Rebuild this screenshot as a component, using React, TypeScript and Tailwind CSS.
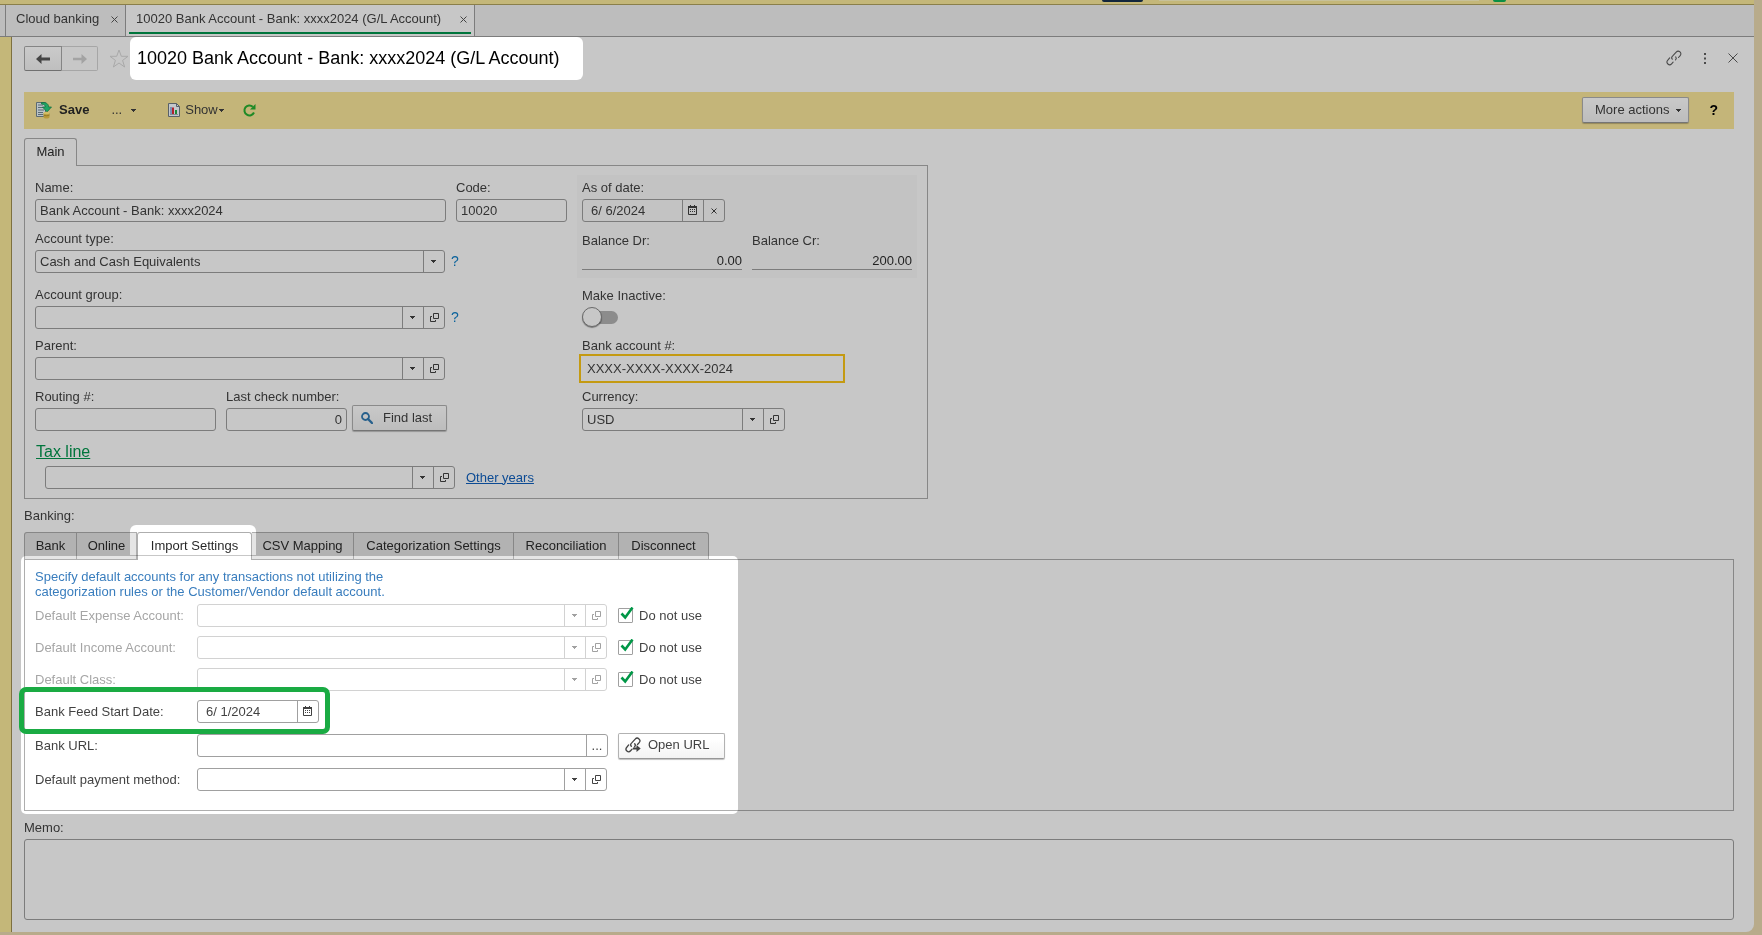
import type { ReactNode } from "react";

const FIELD = "h-[23px] rounded-[3px] border border-[#7c7c7c]";
const LABEL = "block leading-[22px] whitespace-nowrap";
const RAISED =
  "flex h-[26px] shrink-0 items-center rounded-[2px] border border-[#8a8a8a] border-b-[#757575] bg-gradient-to-b from-[#c9c9c9] to-[#bdbdbd] shadow-[0_1px_1px_rgba(0,0,0,0.25)] whitespace-nowrap";

function Caret() {
  return (
    <svg width="5" height="3" viewBox="0 0 5 3" shapeRendering="crispEdges" aria-hidden="true">
      <path d="M0 0h5v1H0zM1 1h3v1H1zM2 2h1v1H2z" fill="currentColor" />
    </svg>
  );
}

function OpenIcon() {
  return (
    <svg width="9" height="9" viewBox="0 0 9 9" fill="none" stroke="currentColor" aria-hidden="true">
      <path d="M3.500.500h5v5h-5zM2 3.500H.500v5h5V7" />
    </svg>
  );
}

function CalendarIcon() {
  return (
    <svg width="9" height="10" viewBox="0 0 9 10" aria-hidden="true">
      <path d="M.500 1.500h8v8h-8z" fill="none" stroke="currentColor" />
      <path d="M0 1h9v2H0zM2 0h1v1H2zM6 0h1v1H6z" fill="currentColor" />
      <path d="M2 4h1v1H2zM4 4h1v1H4zM6 4h1v1H6zM2 6h1v1H2zM4 6h1v1H4zM6 6h1v1H6z" fill="currentColor" />
    </svg>
  );
}

function LinkIcon({ arrow }: { arrow?: boolean }) {
  return (
    <svg width="16" height="16" viewBox="0 0 16 16" fill="none" stroke="currentColor" strokeWidth={arrow ? 1.3 : 1.1} strokeLinecap="round" aria-hidden="true">
      <path d="M6.300 9.200c-.8-.9-.7-2.200.2-3.100l3.700-4c1-1.100 2.700-1.200 3.800-.2s1.200 2.600.2 3.700l-1.700 1.900" />
      <path d="M9.700 6.800c.8.900.7 2.200-.2 3.100" />
      <path d="M3.700 7.900 1.800 10.200c-1 1.100-1 2.800.1 3.800s2.700.9 3.700-.2l1.500-1.700" />
      {arrow && <path d="M8 10.500h3.500V8l4.200 3.500-4.200 3.500v-2.500H8z" fill="currentColor" stroke="none" />}
    </svg>
  );
}

function SaveIcon() {
  return (
    <svg width="16" height="17" viewBox="0 0 16 17" aria-hidden="true">
      <path d="M.5.500h9v14h-9z" fill="#b9c2c6" stroke="#5b6a72" />
      <path d="M2 3h5M2 5.500h5M2 8h6M2 10.500h5M2 12.500h5" stroke="#5b6a72" />
      <path d="M5.500.500c4-.3 7 .8 7.200 4.500h2.800l-4.500 5-4.500-5h2.700C9 3 8 2 5.500 2z" fill="#1fa564" stroke="#0b6b3b" strokeWidth=".7" />
      <path d="M7.500 11v4c0 2 6 2 6 0v-4z" fill="#b99a3a" />
      <ellipse cx="10.500" cy="11" rx="3" ry="1.200" fill="#d3bd66" />
      <path d="M7.500 13c1 1 5 1 6 0" fill="none" stroke="#83691b" strokeWidth=".7" />
    </svg>
  );
}

function ReportIcon() {
  return (
    <svg width="12" height="14" viewBox="0 0 12 14" aria-hidden="true">
      <path d="M.5.500h8l3 3v10H.5z" fill="#c4c8cc" stroke="#586068" />
      <path d="M8.500.500v3h3" fill="none" stroke="#586068" />
      <path d="M3 4v7" stroke="#33589a" />
      <path d="M5 4.500v6.500" stroke="#b3202c" strokeWidth="2" />
      <path d="M8 7v4" stroke="#1d8a38" strokeWidth="2" />
      <path d="M2 11.500h8" stroke="#586068" strokeWidth=".6" />
    </svg>
  );
}

// Lifts everything below it back to full brightness.
// Its parents must not open a stacking context, or the blend sees nothing.
function Spotlight({ className }: { className: string }) {
  return (
    <div
      aria-hidden="true"
      className={`pointer-events-none absolute z-20 bg-[#393939] mix-blend-color-dodge ${className}`}
    />
  );
}

type ComboProps = {
  id: string;
  value?: string;
  width?: string;
  openable?: boolean;
  disabled?: boolean;
};

function Combo({ id, value = "", width = "w-[410px]", openable = true, disabled }: ComboProps) {
  const line = disabled ? "border-[#a3a3a3]" : "border-[#7c7c7c]";
  const ink = disabled ? "text-[#7d7d7d]" : "text-[#333333]";
  return (
    <div className={`flex h-[23px] shrink-0 rounded-[3px] border ${line} ${ink} ${width}`}>
      <select id={id} disabled={disabled} defaultValue={value} className="min-w-0 flex-1 appearance-none bg-transparent pl-1 outline-none">
        <option value={value}>{value}</option>
      </select>
      <span className={`pointer-events-none flex w-[21px] items-center justify-center border-l pr-px ${line}`}>
        <Caret />
      </span>
      {openable && (
        <button type="button" aria-label="Open" disabled={disabled} className={`flex w-[21px] items-center justify-center border-l pl-px ${line}`}>
          <OpenIcon />
        </button>
      )}
    </div>
  );
}

function DateBox({ id, value, clearable }: { id: string; value: string; clearable?: boolean }) {
  return (
    <div className={`flex w-fit ${FIELD}`}>
      <input id={id} defaultValue={value} className="w-[99px] bg-transparent pl-2 outline-none" />
      <button type="button" aria-label="Choose date" className="flex w-[21px] items-center justify-center border-l border-[#7c7c7c] pr-px pb-px">
        <CalendarIcon />
      </button>
      {clearable && (
        <button type="button" aria-label="Clear date" className="flex w-[21px] items-center justify-center border-l border-[#7c7c7c]">
          <svg width="6" height="6" viewBox="0 0 6 6" stroke="currentColor" aria-hidden="true">
            <path d="M.5.500l5 5M5.500.500l-5 5" />
          </svg>
        </button>
      )}
    </div>
  );
}

function Field({ id, label, children }: { id: string; label: string; children: ReactNode }) {
  return (
    <div>
      <label htmlFor={id} className={LABEL}>{label}</label>
      {children}
    </div>
  );
}

function Help() {
  return (
    <button type="button" aria-label="Help" className="ml-[6px] text-[14px] text-[#0b639c]">?</button>
  );
}

function WindowTab({ title, width, active }: { title: string; width: string; active?: boolean }) {
  return (
    <div className={`flex border-r border-[#7c7c7c] px-[3px] ${width} ${active ? "bg-[#c7c7c7]" : ""}`}>
      <div className={`mb-[2px] flex flex-1 items-center justify-between border-b-2 pt-px pr-1 pl-[7px] ${active ? "border-[#00753c]" : "border-transparent"}`}>
        <button type="button" className="whitespace-nowrap">{title}</button>
        <button type="button" aria-label="Close tab">
          <svg width="7" height="7" viewBox="0 0 7 7" stroke="#444444" aria-hidden="true">
            <path d="M.5.500l6 6M6.500.500l-6 6" />
          </svg>
        </button>
      </div>
    </div>
  );
}

const bankingTabs = [
  { title: "Bank", width: "w-[53px]" },
  { title: "Online", width: "w-[60px]" },
  { title: "Import Settings", width: "w-[115px]" },
  { title: "CSV Mapping", width: "w-[102px]" },
  { title: "Categorization Settings", width: "w-[160px]" },
  { title: "Reconciliation", width: "w-[105px]" },
  { title: "Disconnect", width: "w-[90px]" },
];

const defaults = [
  { id: "expense", label: "Default Expense Account:" },
  { id: "income", label: "Default Income Account:" },
  { id: "class", label: "Default Class:" },
];

function MainPanel() {
  return (
    <div className="flex w-fit gap-[10px] border border-[#878787] pt-[9px] pr-[10px] pb-[9px] pl-[10px]">
      <div className="flex w-[532px] flex-col gap-[6px] pt-[2px]">
        <div className="flex gap-[10px]">
          <Field id="name" label="Name:">
            <input id="name" defaultValue="Bank Account - Bank: xxxx2024" className={`block w-[411px] bg-transparent px-1 ${FIELD}`} />
          </Field>
          <Field id="code" label="Code:">
            <input id="code" defaultValue="10020" className={`block w-[111px] bg-transparent px-1 ${FIELD}`} />
          </Field>
        </div>
        <Field id="type" label="Account type:">
          <div className="flex">
            <Combo id="type" value="Cash and Cash Equivalents" openable={false} />
            <Help />
          </div>
        </Field>
        <div className="pt-[5px]">
          <Field id="group" label="Account group:">
            <div className="flex">
              <Combo id="group" />
              <Help />
            </div>
          </Field>
        </div>
        <Field id="parent" label="Parent:">
          <Combo id="parent" />
        </Field>
        <div className="flex items-end">
          <Field id="routing" label="Routing #:">
            <input id="routing" className={`block w-[181px] bg-transparent px-1 ${FIELD}`} />
          </Field>
          <div className="ml-[10px]">
            <Field id="check" label="Last check number:">
              <input id="check" defaultValue="0" className={`block w-[121px] bg-transparent px-1 text-right ${FIELD}`} />
            </Field>
          </div>
          <button type="button" className={`ml-[5px] gap-[10px] pr-[14px] pl-2 ${RAISED}`}>
            <svg width="12" height="12" viewBox="0 0 12 12" fill="none" stroke="#27608c" aria-hidden="true">
              <circle cx="4.500" cy="4.500" r="3.500" strokeWidth="1.800" />
              <path d="M7 7l4 4" strokeWidth="2.400" strokeLinecap="round" />
            </svg>
            Find last
          </button>
        </div>
        <div>
          <a href="#tax-line" className="ml-px block w-fit pt-[3px] text-[16px] leading-6 text-[#00753c] underline">Tax line</a>
          <div className="mt-[2px] flex items-center pl-[10px]">
            <Combo id="taxline" />
            <a href="#other-years" className="ml-[11px] text-[#0c4b94] underline">Other years</a>
          </div>
        </div>
      </div>

      <div className="w-[340px]">
        <div className="bg-[#c3c3c3] px-[5px] pt-[2px] pb-2">
          <Field id="asof" label="As of date:">
            <DateBox id="asof" value="6/ 6/2024" clearable />
          </Field>
          <div className="mt-2 flex gap-[10px]">
            <div className="w-[160px]">
              <label htmlFor="dr" className={LABEL}>Balance Dr:</label>
              <input id="dr" readOnly defaultValue="0.00" className="block h-[18px] w-full border-b border-[#7c7c7c] bg-transparent text-right text-[#1f1f1f]" />
            </div>
            <div className="w-[160px]">
              <label htmlFor="cr" className={LABEL}>Balance Cr:</label>
              <input id="cr" readOnly defaultValue="200.00" className="block h-[18px] w-full border-b border-[#7c7c7c] bg-transparent text-right text-[#1f1f1f]" />
            </div>
          </div>
        </div>
        <div className="flex flex-col gap-[6px] px-[5px] pt-[7px]">
          <div className="h-[44px]">
            <Field id="inactive" label="Make Inactive:">
              <div className="relative flex h-5 w-9 items-center">
                <input id="inactive" type="checkbox" role="switch" className="ml-2 h-[13px] w-7 appearance-none rounded-full bg-[#8c8c8c]" />
                <span className="pointer-events-none absolute left-0 size-5 rounded-full border border-[#6a6a6a] bg-[#c7c7c7] shadow-[0_1px_1px_rgba(0,0,0,0.4)]" />
              </div>
            </Field>
          </div>
          <Field id="accountno" label="Bank account #:">
            <input
              id="accountno"
              defaultValue="XXXX-XXXX-XXXX-2024"
              className="block h-[23px] w-[260px] bg-transparent px-[5px] outline-2 outline-offset-1 outline-[#c49a12]"
            />
          </Field>
          <Field id="currency" label="Currency:">
            <Combo id="currency" value="USD" width="w-[203px]" />
          </Field>
        </div>
      </div>
    </div>
  );
}

function ImportPanel() {
  return (
    <div className="relative border border-[#878787] px-[10px] pt-[9px] pb-[19px]">
      <p className="mb-[5px] leading-[15px] text-[#2c6193]">
        Specify default accounts for any transactions not utilizing the
        <br />
        categorization rules or the Customer/Vendor default account.
      </p>
      <div className="flex flex-col gap-[9px]">
        {defaults.map((d) => (
          <div key={d.id} className="flex h-[23px] items-center">
            <label htmlFor={d.id} className="w-[162px] text-[#808080]">{d.label}</label>
            <Combo id={d.id} disabled />
            <label className="ml-[11px] flex items-center gap-[6px]">
              <span className="relative flex">
                <input type="checkbox" defaultChecked className="size-[15px] appearance-none rounded-[1px] border border-[#7c7c7c]" />
                <svg width="14" height="13" viewBox="0 0 14 13" className="pointer-events-none absolute -top-px left-[2px]" fill="none" stroke="#007537" strokeWidth="2.600" aria-hidden="true">
                  <path d="M1.500 6.500l3.700 4L12.500.500" />
                </svg>
              </span>
              Do not use
            </label>
          </div>
        ))}
        <div className="flex h-[23px] items-center">
          <label htmlFor="feed" className="w-[162px]">Bank Feed Start Date:</label>
          <DateBox id="feed" value="6/ 1/2024" />
        </div>
      </div>
      <div className="mt-[11px] flex flex-col gap-[11px]">
        <div className="flex h-[23px] items-center">
          <label htmlFor="url" className="w-[162px]">Bank URL:</label>
          <div className={`flex w-[411px] ${FIELD}`}>
            <input id="url" className="min-w-0 flex-1 bg-transparent px-1" />
            <button type="button" aria-label="Edit URL" className="w-[21px] border-l border-[#7c7c7c]">...</button>
          </div>
          <button type="button" className={`ml-[10px] gap-[7px] pr-[15px] pb-[2px] pl-[6px] ${RAISED}`}>
            <LinkIcon arrow />
            Open URL
          </button>
        </div>
        <div className="flex h-[23px] items-center">
          <label htmlFor="payment" className="w-[162px]">Default payment method:</label>
          <Combo id="payment" />
        </div>
      </div>
      <Spotlight className="-top-1 -bottom-1 -left-1 w-[717px] rounded-[5px]" />
      <div aria-hidden="true" className="pointer-events-none absolute top-[127px] -left-[6px] z-30 h-[47px] w-[311px] rounded-[7px] border-[5px] border-[#1aab43]" />
    </div>
  );
}

export default function App() {
  return (
    <div className="flex min-h-screen flex-col bg-[#b8ab8b] pr-2 pb-[3px] font-['Liberation_Sans',Arial,sans-serif] text-[13px] text-[#333333]">
      <div className="flex h-[5px] items-start justify-end border-b border-[#8a7f4a] bg-[#c4b779] pr-[248px]">
        <span className="h-[2px] w-[41px] rounded-b-[2px] bg-[#12263c]" />
        <span className="ml-4 h-px w-[320px] bg-[#c7c19a]" />
        <span className="ml-[14px] h-[2px] w-[13px] rounded-b-full bg-[#0a8f45]" />
      </div>

      <div className="flex h-8 border-b border-[#7c7c7c] bg-[#bdbdbd]">
        <span className="w-[6px] border-r border-[#7c7c7c]" />
        <WindowTab title="Cloud banking" width="w-[120px]" />
        <WindowTab title="10020 Bank Account - Bank: xxxx2024 (G/L Account)" width="w-[349px]" active />
      </div>

      <div className="flex flex-1">
        <div className="w-3 shrink-0 border-r border-[#7d7040] bg-[#c4b779]" />
        <main className="min-w-0 flex-1 rounded-br-[8px] bg-[#c7c7c7] pr-5 pb-3 pl-3">
          <header className="flex h-[55px] items-start">
            <div className="mt-[9px] flex">
              <button type="button" aria-label="Back" className="flex h-[25px] w-[38px] items-center justify-center rounded-l-[2px] border border-[#858585] border-b-[#707070] bg-gradient-to-b from-[#cacaca] to-[#bfbfbf]">
                <svg width="14" height="10" viewBox="0 0 14 10" fill="#454545" aria-hidden="true">
                  <path d="M0 5l5.500-5v3.500H14v3H5.500V10z" />
                </svg>
              </button>
              <button type="button" aria-label="Forward" className="flex h-[25px] w-9 items-center justify-center rounded-r-[2px] border border-l-0 border-[#a6a6a6]">
                <svg width="14" height="10" viewBox="0 0 14 10" fill="#a3a3a3" aria-hidden="true">
                  <path d="M14 5L8.500 0v3.800H0v2.400h8.500V10z" />
                </svg>
              </button>
            </div>
            <button type="button" aria-label="Add to favorites" className="mt-3 ml-[11px]">
              <svg width="20" height="19" viewBox="0 0 20 19" fill="none" stroke="#a9a9a9" aria-hidden="true">
                <path d="M10 1l2.300 6.300H19l-5.400 4.100 2 6.600L10 14l-5.600 4 2-6.600L1 7.300h6.700z" />
              </svg>
            </button>
            <h1 className="relative ml-px h-[43px] w-[453px] pl-[7px] text-[18px] leading-[42px] whitespace-nowrap text-black">
              10020 Bank Account - Bank: xxxx2024 (G/L Account)
              <Spotlight className="inset-0 rounded-[6px]" />
            </h1>
            <div className="mt-[13px] ml-auto flex items-center gap-[22px] text-[#4a4a4a]">
              <button type="button" aria-label="Copy link"><LinkIcon /></button>
              <button type="button" aria-label="More">
                <svg width="2" height="11" viewBox="0 0 2 11" fill="currentColor" aria-hidden="true">
                  <path d="M0 0h2v2H0zM0 4.500h2v2H0zM0 9h2v2H0z" />
                </svg>
              </button>
              <button type="button" aria-label="Close" className="-mr-1">
                <svg width="10" height="10" viewBox="0 0 10 10" stroke="currentColor" aria-hidden="true">
                  <path d="M.5.500l9 9M9.500.500l-9 9" />
                </svg>
              </button>
            </div>
          </header>

          <div className="flex h-[37px] items-center bg-[#c4b579] pr-4 pb-px pl-3">
            <button type="button" className="flex items-center gap-[7px] font-bold text-[#222222]">
              <SaveIcon />
              Save
            </button>
            <button type="button" className="ml-[22px] flex items-center gap-[9px]">
              <span>...</span>
              <Caret />
            </button>
            <button type="button" className="ml-[32px] flex items-center gap-[5px]">
              <ReportIcon />
              <span className="flex items-center gap-px">Show <Caret /></span>
            </button>
            <button type="button" aria-label="Refresh" className="ml-[19px]">
              <svg width="13" height="13" viewBox="0 0 13 13" fill="none" stroke="#1f8a26" aria-hidden="true">
                <path d="M9.800 2.700A5 5 0 1 0 11 8.500" strokeWidth="2" />
                <path d="M12.500 0v5.500H7z" fill="#1f8a26" stroke="none" />
              </svg>
            </button>
            <button type="button" className={`ml-auto gap-[7px] pr-[7px] pl-3 ${RAISED}`}>
              More actions <Caret />
            </button>
            <button type="button" aria-label="Help" className="ml-5 text-[14px] font-bold text-black">?</button>
          </div>

          <div className="mt-[9px] flex">
            <button type="button" className="relative -mb-px h-7 w-[53px] rounded-t-[3px] border border-b-0 border-[#878787] bg-[#c7c7c7] pb-[2px] text-[#222222]">
              Main
            </button>
          </div>
          <MainPanel />

          <h2 className="mt-[7px] leading-5">Banking:</h2>
          <div role="tablist" className="mt-[6px] flex">
            {bankingTabs.map(({ title, width }) =>
              title === "Import Settings" ? (
                <div key={title} className={`relative -mb-px h-7 ${width}`}>
                  <button type="button" role="tab" aria-selected="true" className="relative z-10 h-full w-full rounded-t-[3px] border border-b-0 border-[#878787] bg-[#c7c7c7] pb-[2px] whitespace-nowrap text-[#1c1c1c]">
                    {title}
                  </button>
                  <Spotlight className="-top-[7px] -right-1 bottom-[5px] -left-[7px] rounded-t-[6px]" />
                </div>
              ) : (
                <button key={title} type="button" role="tab" aria-selected="false" className={`h-[27px] border-t border-r border-[#878787] bg-[#b2b2b2] whitespace-nowrap text-[#222222] first:rounded-tl-[3px] first:border-l last:rounded-tr-[3px] ${width}`}>
                  {title}
                </button>
              ),
            )}
          </div>
          <ImportPanel />

          <label htmlFor="memo" className={`mt-[6px] ${LABEL}`}>Memo:</label>
          <textarea id="memo" className="block h-[81px] w-full resize-none rounded-[3px] border border-[#7c7c7c] bg-transparent p-1" />
        </main>
      </div>
    </div>
  );
}
